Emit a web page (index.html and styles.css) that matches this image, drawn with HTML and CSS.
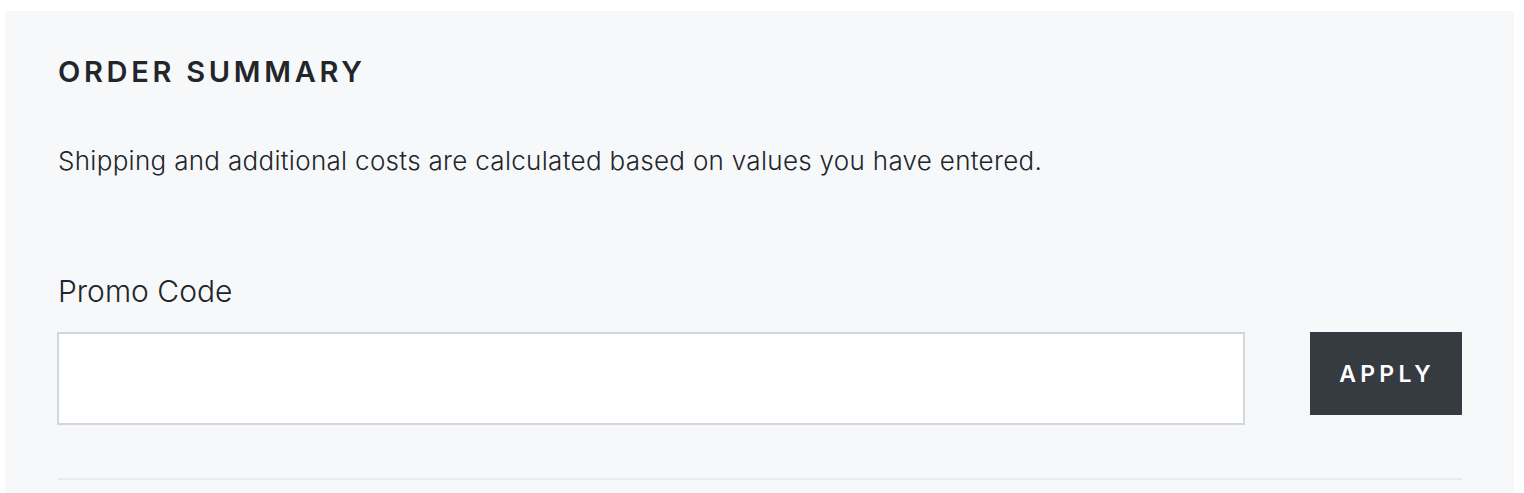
FILE: index.html
```html
<!DOCTYPE html>
<html lang="en">
<head>
<meta charset="utf-8">
<title>Order Summary</title>
<link rel="stylesheet" href="styles.css">
</head>
<body>
<section class="summary">
  <h2 class="summary-title">ORDER SUMMARY</h2>
  <p class="summary-note">Shipping and additional costs are calculated based on values you have entered.</p>
  <form class="promo">
    <label class="promo-label" for="promo">Promo Code</label>
    <div class="promo-row">
      <input class="promo-input" id="promo" type="text">
      <button class="promo-btn" type="button">APPLY</button>
    </div>
  </form>
  <hr class="divider">
</section>
</body>
</html>
```

FILE: styles.css
```css
html, body {
  margin: 0;
  padding: 0;
  background: #ffffff;
}
body {
  padding: 11px 10px 0 5px;
  font-family: Inter, "Liberation Sans", Arial, sans-serif;
  color: #22252a;
  height: 493px;
  box-sizing: border-box;
  overflow: hidden;
}
.summary {
  background: #f7f8fa;
  padding: 44px 52px 40px 53px;
  min-height: 600px;
}
.summary-title {
  margin: 0;
  font-size: 29px;
  font-weight: 600;
  letter-spacing: 3.7px;
  line-height: 34px;
}
.summary-note {
  margin: 56px 0 0;
  font-size: 26px;
  font-weight: 300;
  letter-spacing: 0.3px;
  line-height: 32px;
}
.promo {
  margin-top: 96px;
}
.promo-label {
  display: block;
  font-size: 30px;
  line-height: 36px;
  font-weight: 300;
}
.promo-row {
  display: flex;
  align-items: flex-start;
  gap: 65px;
  margin-top: 23px;
}
.promo-input {
  width: 1188px;
  height: 93px;
  box-sizing: border-box;
  border: 2px solid #d3d6dc;
  background: #ffffff;
  margin: 0 0 0 -1px;
  padding: 0 16px;
  font-size: 24px;
}
.promo-btn {
  width: 152px;
  height: 83px;
  border: 0;
  background: #363a41;
  color: #ffffff;
  font-family: Inter, "Liberation Sans", Arial, sans-serif;
  font-size: 23px;
  font-weight: 600;
  letter-spacing: 4.3px;
  padding: 0 0 0 2px;
  cursor: pointer;
}
.divider {
  margin: 53px 0 0;
  border: 0;
  height: 2px;
  background: #e8eaed;
}
```
